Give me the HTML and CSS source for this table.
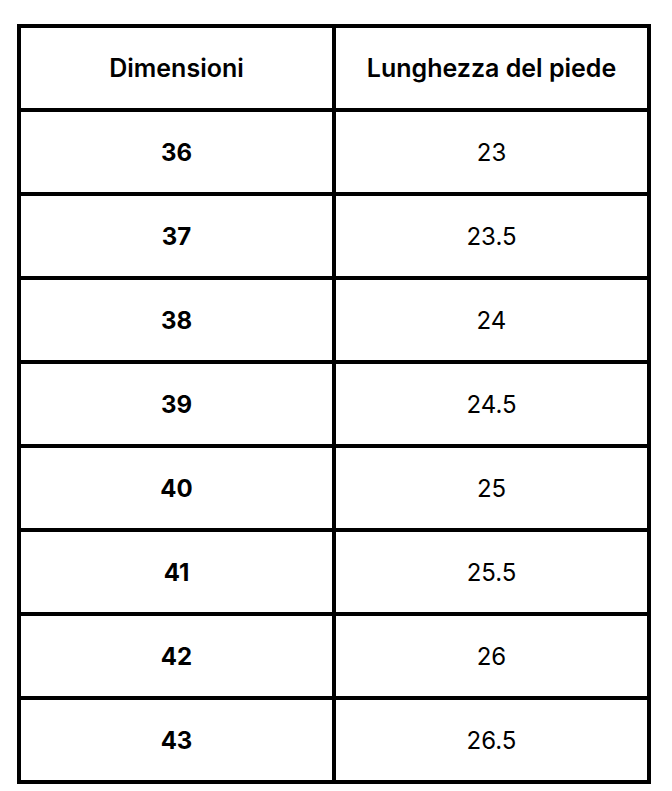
FILE: index.html
```html
<!DOCTYPE html>
<html lang="it">
<head>
<meta charset="utf-8">
<title>Tabella taglie</title>
<link rel="stylesheet" href="styles.css">
</head>
<body>
<div class="table">
  <div class="cell head">Dimensioni</div>
  <div class="cell head">Lunghezza del piede</div>
  <div class="cell size">36</div><div class="cell len">23</div>
  <div class="cell size">37</div><div class="cell len">23.5</div>
  <div class="cell size">38</div><div class="cell len">24</div>
  <div class="cell size">39</div><div class="cell len">24.5</div>
  <div class="cell size">40</div><div class="cell len">25</div>
  <div class="cell size">41</div><div class="cell len">25.5</div>
  <div class="cell size">42</div><div class="cell len">26</div>
  <div class="cell size">43</div><div class="cell len">26.5</div>
</div>
</body>
</html>
```

FILE: styles.css
```css
html, body {
  margin: 0;
  padding: 0;
  background: #ffffff;
}
body {
  padding: 24px 0 0 17px;
  font-family: "Inter", "Noto Sans", sans-serif;
  color: #000;
}
.table {
  width: 634px;
  box-sizing: border-box;
  display: grid;
  grid-template-columns: 311px 311px;
  grid-auto-rows: 80px;
  gap: 4px;
  padding: 4px;
  background: #000;
}
.cell {
  background: #fff;
  display: flex;
  align-items: center;
  justify-content: center;
  font-size: 24px;
}
.head {
  font-size: 25px;
  font-weight: 600;
}
.size {
  font-weight: 700;
}
.len {
  font-weight: 400;
}
```
